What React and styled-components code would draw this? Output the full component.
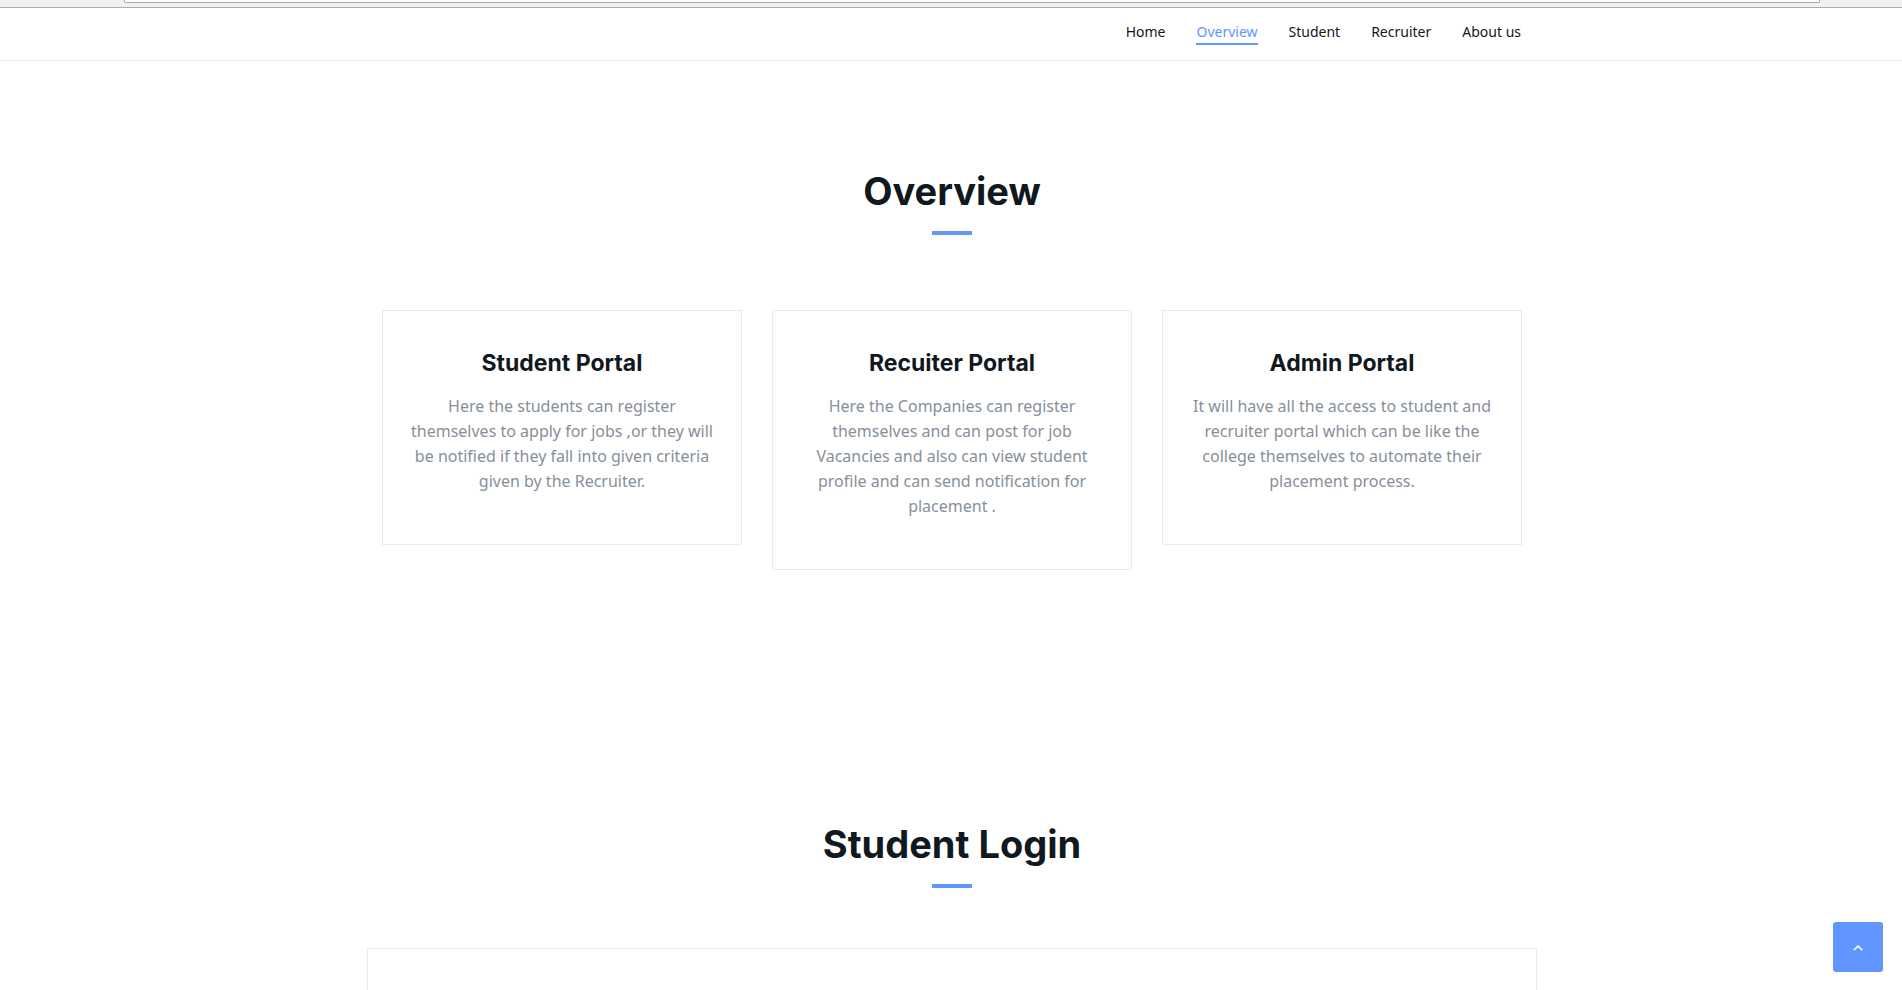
import React from 'react';
import styled, { createGlobalStyle } from 'styled-components';

const accent = '#6195ff';
const line = '#ebebeb';
const ink = '#101820';

const GlobalStyle = createGlobalStyle`
  *, *::before, *::after { box-sizing: border-box; }
  body {
    margin: 0;
    background: #fff;
    color: #868f9b;
    font: 400 16px/25px "Noto Sans", sans-serif;
  }
`;

const Page = styled.div`
  display: flex;
  flex-direction: column;
  min-height: 100vh;
`;

const BrowserEdge = styled.div`
  height: 8px;
  padding: 0 82px 0 124px;
  background: #f1f1f1;
  border-bottom: 1px solid #adadad;
`;

const AddressBar = styled.div`
  height: 3px;
  background: #fff;
  border: 1px solid #a6a6a6;
  border-top: 0;
  border-radius: 0 0 2px 2px;
`;

const Header = styled.header`
  border-bottom: 1px solid ${line};
`;

const Main = styled.main`
  display: flex;
  flex: 1;
  flex-direction: column;
  padding-left: 2px;
`;

const Container = styled.div`
  width: 100%;
  max-width: 1170px;
  margin: 0 auto;
  padding: 0 15px;
`;

const Nav = styled.nav`
  display: flex;
  justify-content: flex-end;
  gap: 31px;
  padding: 12px 0 15px;
`;

const NavLink = styled.a`
  border-bottom: 2px solid ${({ $active }) => ($active ? accent : 'transparent')};
  color: ${({ $active }) => ($active ? accent : ink)};
  font-size: 14px;
  line-height: 23px;
  text-decoration: none;
`;

const OverviewSection = styled.section`
  padding: 105px 0 125px;
`;

const LoginSection = styled.section`
  display: flex;
  flex: 1;
  flex-direction: column;
  padding-top: 124px;
`;

const SectionTitle = styled.h2`
  margin: 0;
  color: ${ink};
  font: 700 38px/50px Inter, sans-serif;
  text-align: center;

  &::after {
    content: '';
    display: block;
    width: 40px;
    height: 4px;
    margin: 15px auto 0;
    background: ${accent};
  }
`;

const Cards = styled.div`
  display: grid;
  grid-template-columns: repeat(3, 1fr);
  align-items: start;
  gap: 30px;
  margin-top: 75px;

  @media (max-width: 900px) {
    grid-template-columns: 1fr;
  }
`;

const Card = styled.article`
  padding: 37px 25px 50px;
  border: 1px solid ${line};
  text-align: center;
`;

const CardTitle = styled.h3`
  margin: 0 0 16px;
  color: ${ink};
  font: 700 23px/30px Inter, sans-serif;
`;

const CardText = styled.p`
  margin: 0;
`;

const LoginPanel = styled.div`
  flex: 1;
  width: 100%;
  max-width: 1170px;
  min-height: 40px;
  margin: 60px auto 0;
  border: 1px solid ${line};
  border-bottom: 0;
`;

const BackToTop = styled.button`
  position: fixed;
  right: 19px;
  bottom: 18px;
  display: flex;
  align-items: center;
  justify-content: center;
  width: 50px;
  height: 50px;
  padding: 2px 0 0;
  border: 0;
  border-radius: 3px;
  background: ${accent};
  color: #fff;
  cursor: pointer;
`;

const links = ['Home', 'Overview', 'Student', 'Recruiter', 'About us'];

const portals = [
  {
    title: 'Student Portal',
    text: 'Here the students can register themselves to apply for jobs ,or they will be notified if they fall into given criteria given by the Recruiter.',
  },
  {
    title: 'Recuiter Portal',
    text: 'Here the Companies can register themselves and can post for job Vacancies and also can view student profile and can send notification for placement .',
  },
  {
    title: 'Admin Portal',
    text: 'It will have all the access to student and recruiter portal which can be like the college themselves to automate their placement process.',
  },
];

export default function App() {
  return (
    <Page>
      <GlobalStyle />
      <BrowserEdge>
        <AddressBar />
      </BrowserEdge>
      <Header>
        <Container>
          <Nav>
            {links.map((label) => (
              <NavLink key={label} href="#" $active={label === 'Overview'}>
                {label}
              </NavLink>
            ))}
          </Nav>
        </Container>
      </Header>
      <Main>
        <OverviewSection>
          <Container>
            <SectionTitle>Overview</SectionTitle>
            <Cards>
              {portals.map(({ title, text }) => (
                <Card key={title}>
                  <CardTitle>{title}</CardTitle>
                  <CardText>{text}</CardText>
                </Card>
              ))}
            </Cards>
          </Container>
        </OverviewSection>
        <LoginSection>
          <SectionTitle>Student Login</SectionTitle>
          <LoginPanel />
        </LoginSection>
      </Main>
      <BackToTop type="button" aria-label="Back to top" onClick={() => window.scrollTo(0, 0)}>
        <svg width="10" height="6" viewBox="0 0 10 6" fill="none" stroke="currentColor" strokeWidth="1.6">
          <path d="M.7 5.3 5 1.1l4.3 4.2" />
        </svg>
      </BackToTop>
    </Page>
  );
}
